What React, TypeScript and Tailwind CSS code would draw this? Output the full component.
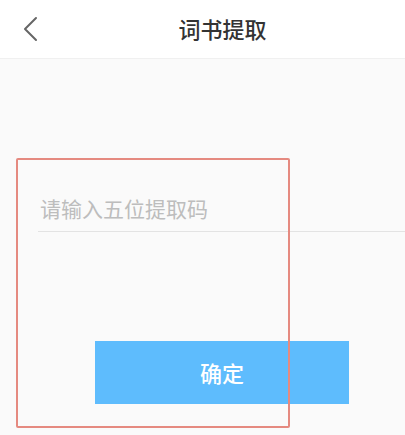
export default function App() {
  const font = { fontFamily: '"Noto Sans CJK SC", "Noto Sans", sans-serif' };
  return (
    <div className="relative h-[435px] w-[405px] overflow-hidden bg-[#fafafa]" style={font}>
      {/* header */}
      <div className="flex h-[59px] items-center border-b border-[#f0f0f0] bg-white">
        <div className="flex w-[60px] items-center pl-[22px]">
          <svg width="16" height="26" viewBox="0 0 16 26" fill="none">
            <path d="M14 2 L3 13 L14 24" stroke="#666" strokeWidth="2" strokeLinecap="round" strokeLinejoin="round" />
          </svg>
        </div>
        <div className="flex-1 pb-[2px] pr-[20px] text-center text-[22px] font-medium leading-none text-[#333]">词书提取</div>
      </div>

      {/* body */}
      <div className="pt-[130px]">
        <div className="ml-[38px] flex h-[43px] items-center border-b border-[#e3e3e3] pl-[2px] pb-[4px] text-[21px] leading-none text-[#bdbdbd]">
          请输入五位提取码
        </div>
        <div className="mt-[109px] ml-[95px] flex h-[63px] w-[254px] items-center justify-center bg-[#5ebcfd] text-[22px] font-medium text-white">
          确定
        </div>
      </div>

      {/* annotation box */}
      <div className="absolute left-[16px] top-[158px] h-[270px] w-[274px] rounded-[2px] border-2 border-[#e58a80]" />
    </div>
  );
}
